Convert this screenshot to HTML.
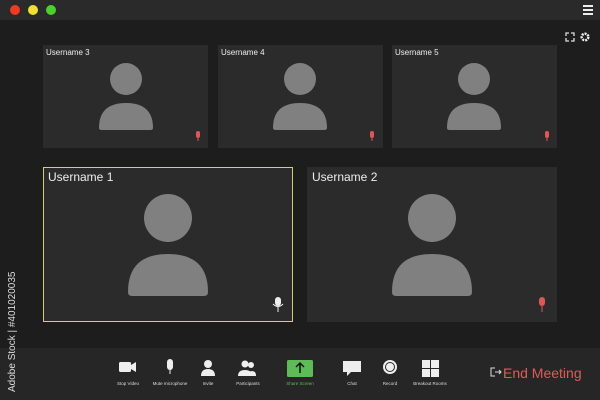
<!DOCTYPE html>
<html><head><style>
body{margin:0;width:600px;height:400px;overflow:hidden;background:#1d1d1d;font-family:"Liberation Sans",sans-serif;position:relative}
.tb{position:absolute;left:0;top:0;width:600px;height:20px;background:#2a2a2a}
.dot{position:absolute;top:5px;width:10px;height:10px;border-radius:50%}
.tile{position:absolute;background:#2b2b2b;box-sizing:border-box}
.nm{position:absolute;color:#eee}
.bar{position:absolute;left:0;top:348px;width:600px;height:52px;background:#262626}
.lbl{position:absolute;top:381px;font-size:4.5px;color:#ddd;width:60px;text-align:center}
</style></head><body>
<div class="tb"></div>
<div class="dot" style="left:10px;background:#f33824"></div>
<div class="dot" style="left:28px;background:#f0e12c"></div>
<div class="dot" style="left:46px;background:#4ad22c"></div>
<svg style="position:absolute;left:0;top:0" width="600" height="400">
<rect x="583" y="5" width="10" height="2" fill="#eee"/><rect x="583" y="9" width="10" height="2" fill="#eee"/><rect x="583" y="13" width="10" height="2" fill="#eee"/>
<path d="M566 36v-3h3M571 33h3v3M574 38v3h-3M569 41h-3v-3" stroke="#ddd" stroke-width="1.3" fill="none"/>
<circle cx="585" cy="37" r="3.3" stroke="#eee" stroke-width="2.5" fill="none" stroke-dasharray="2 1"/>
</svg>
<div class="tile" style="left:43px;top:45px;width:165px;height:103px"></div>
<div class="tile" style="left:218px;top:45px;width:165px;height:103px"></div>
<div class="tile" style="left:392px;top:45px;width:165px;height:103px"></div>
<div class="tile" style="left:43px;top:167px;width:250px;height:155px;border:1.5px solid #d1d36a"></div>
<div class="tile" style="left:307px;top:167px;width:250px;height:155px"></div>
<div class="nm" style="left:46px;top:48px;font-size:8px">Username 3</div>
<div class="nm" style="left:221px;top:48px;font-size:8px">Username 4</div>
<div class="nm" style="left:395px;top:48px;font-size:8px">Username 5</div>
<div class="nm" style="left:48px;top:170px;font-size:12px">Username 1</div>
<div class="nm" style="left:312px;top:170px;font-size:12px">Username 2</div>
<svg style="position:absolute;left:0;top:0" width="600" height="400">
<g fill="#808080">
<circle cx="126" cy="79" r="16"/><path d="M99 128q0-25 27-25t27 25v0q0 2-3 2h-48q-3 0-3-2z"/>
<circle cx="300" cy="79" r="16"/><path d="M273 128q0-25 27-25t27 25v0q0 2-3 2h-48q-3 0-3-2z"/>
<circle cx="474" cy="79" r="16"/><path d="M447 128q0-25 27-25t27 25v0q0 2-3 2h-48q-3 0-3-2z"/>
<circle cx="168" cy="218" r="24"/><path d="M128 292q0-38 40-38t40 38q0 4-4 4h-72q-4 0-4-4z"/>
<circle cx="432" cy="218" r="24"/><path d="M392 292q0-38 40-38t40 38q0 4-4 4h-72q-4 0-4-4z"/>
</g>
<g fill="#e05555"><rect x="196" y="131" width="4" height="7" rx="2"/><rect x="197.5" y="138" width="1" height="3"/>
<rect x="370" y="131" width="4" height="7" rx="2"/><rect x="371.5" y="138" width="1" height="3"/>
<rect x="545" y="131" width="4" height="7" rx="2"/><rect x="546.5" y="138" width="1" height="3"/>
<rect x="539" y="297" width="6" height="9" rx="3"/><rect x="541.5" y="306" width="1" height="6"/></g>
<g fill="#eee"><rect x="275" y="297" width="6" height="9" rx="3"/><rect x="277.5" y="306" width="1" height="6"/><path d="M273 304q5 5 10 0" stroke="#eee" fill="none"/></g>
</svg>
<div class="bar"></div>
<svg style="position:absolute;left:0;top:0" width="600" height="400">
<g fill="#eee">
<rect x="119" y="362" width="12" height="10" rx="1.5"/><path d="M131 365l5-3v10l-5-3z"/>
<rect x="167" y="359" width="6" height="11" rx="3"/><rect x="169.5" y="370" width="1" height="4"/>
<circle cx="208" cy="364" r="4"/><path d="M201 376q0-7 7-7t7 7z"/>
<circle cx="245" cy="364" r="3.5"/><circle cx="251" cy="365" r="3"/><path d="M238 376q0-6 7-6t7 6z"/><path d="M248 376q0-5 4-5t4 5z"/>
<path d="M343 361h18v11h-10l-4 4v-4h-4z"/>
<circle cx="390" cy="367" r="7"/>
<rect x="422" y="360" width="8" height="8"/><rect x="431" y="360" width="8" height="8"/><rect x="422" y="369" width="8" height="8"/><rect x="431" y="369" width="8" height="8"/>
</g>
<circle cx="390" cy="367" r="5" fill="#262626"/><circle cx="390" cy="367" r="4" fill="#eee"/>
<rect x="287" y="360" width="26" height="17" rx="1.5" fill="#5cbc55"/>
<path d="M300 373v-9M296 367l4-4 4 4" stroke="#111" stroke-width="1.5" fill="none"/>
<path d="M495 368h-4v8h4M495 372h6M499 370l2 2-2 2" stroke="#ddd" stroke-width="1" fill="none"/>
</svg>
<div class="lbl" style="left:98px">Stop Video</div>
<div class="lbl" style="left:140px">Mute microphone</div>
<div class="lbl" style="left:178px">Invite</div>
<div class="lbl" style="left:218px">Participants</div>
<div class="lbl" style="left:270px;color:#5cbc55">Share Screen</div>
<div class="lbl" style="left:322px">Chat</div>
<div class="lbl" style="left:360px">Record</div>
<div class="lbl" style="left:400px">Breakout Rooms</div>
<div style="position:absolute;left:503px;top:365px;font-size:14px;color:#e05a5a">End Meeting</div>
<div style="position:absolute;left:7px;top:392px;transform:rotate(-90deg);transform-origin:0 0;font-size:10px;color:#ddd;white-space:nowrap">Adobe Stock | #401020035</div>
</body></html>
